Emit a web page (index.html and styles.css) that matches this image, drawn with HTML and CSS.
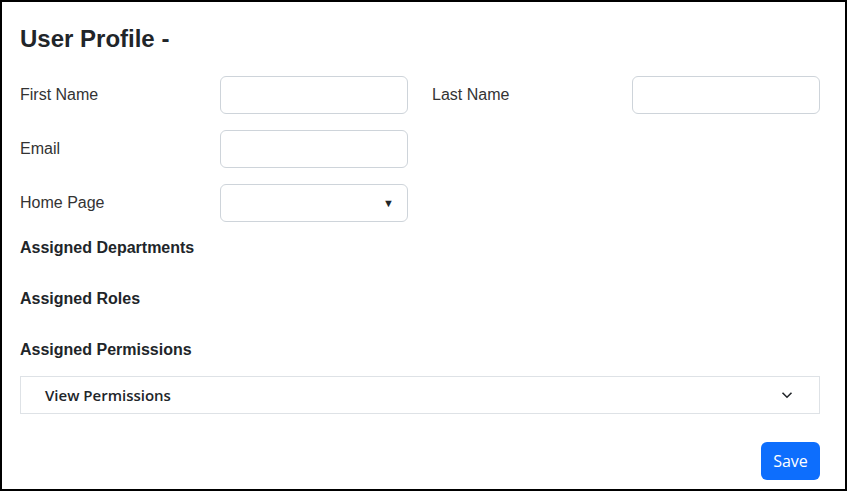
FILE: index.html
```html
<!DOCTYPE html>
<html>
<head>
<meta charset="utf-8">
<link rel="stylesheet" href="styles.css">
</head>
<body>
<div class="frame">
  <h1 class="title">User Profile -</h1>
  <div class="form-grid">
    <label class="lbl">First Name</label>
    <input class="ctl" type="text">
    <label class="lbl lbl2">Last Name</label>
    <input class="ctl" type="text">
    <label class="lbl">Email</label>
    <input class="ctl" type="text">
    <span></span><span></span>
    <label class="lbl">Home Page</label>
    <div class="ctl select"><span class="caret">&#9660;</span></div>
    <span></span><span></span>
  </div>
  <h2 class="section first">Assigned Departments</h2>
  <h2 class="section">Assigned Roles</h2>
  <h2 class="section">Assigned Permissions</h2>
  <div class="accordion">
    <span class="acc-text">View Permissions</span>
    <svg class="chev" width="12" height="8" viewBox="0 0 12 8"><path d="M1.5 1.8 L6 6.2 L10.5 1.8" fill="none" stroke="#212529" stroke-width="1.6"/></svg>
  </div>
  <div class="actions">
    <button class="btn">Save</button>
  </div>
</div>
</body>
</html>
```
FILE: styles.css
```css
html, body {
  margin: 0;
  padding: 0;
  background: #fff;
}
.frame {
  box-sizing: border-box;
  width: 847px;
  height: 491px;
  border: 2px solid #000;
  padding: 22px 25px 0 18px;
  font-family: "Liberation Sans", Arial, sans-serif;
  color: #212529;
}
.title {
  margin: 0;
  font-size: 24px;
  line-height: 29px;
  font-weight: 700;
}
.form-grid {
  margin-top: 23px;
  display: grid;
  grid-template-columns: 200px 188px 224px 188px;
  grid-auto-rows: 38px;
  row-gap: 16px;
  align-items: center;
}
.lbl {
  font-size: 16px;
  color: #333;
}
.lbl2 {
  padding-left: 24px;
}
.ctl {
  box-sizing: border-box;
  width: 188px;
  height: 38px;
  border: 1px solid #ced4da;
  border-radius: 6px;
  background: #fff;
  margin: 0;
  padding: 0 12px;
  font-size: 16px;
  outline: none;
}
.select {
  display: flex;
  align-items: center;
  justify-content: flex-end;
  padding-right: 13px;
}
.caret {
  font-size: 11px;
  color: #212529;
  line-height: 1;
}
.section {
  margin: 0;
  font-size: 16px;
  line-height: 24px;
  font-weight: 700;
  margin-top: 27px;
}
.section.first {
  margin-top: 14px;
}
.accordion {
  margin-top: 14px;
  box-sizing: border-box;
  height: 38px;
  border: 1px solid #dee2e6;
  display: flex;
  align-items: center;
  justify-content: space-between;
  padding: 0 26px 0 24px;
  font-family: "Open Sans", sans-serif;
}
.acc-text {
  font-size: 15px;
  font-weight: 600;
  color: #212529;
}
.chev {
  display: block;
}
.actions {
  display: flex;
  justify-content: flex-end;
  margin-top: 28px;
}
.btn {
  box-sizing: border-box;
  width: 59px;
  height: 38px;
  border: none;
  border-radius: 6px;
  background: #0d6efd;
  color: #fff;
  font-family: "Open Sans", sans-serif;
  font-size: 16px;
  padding: 0;
}
```
